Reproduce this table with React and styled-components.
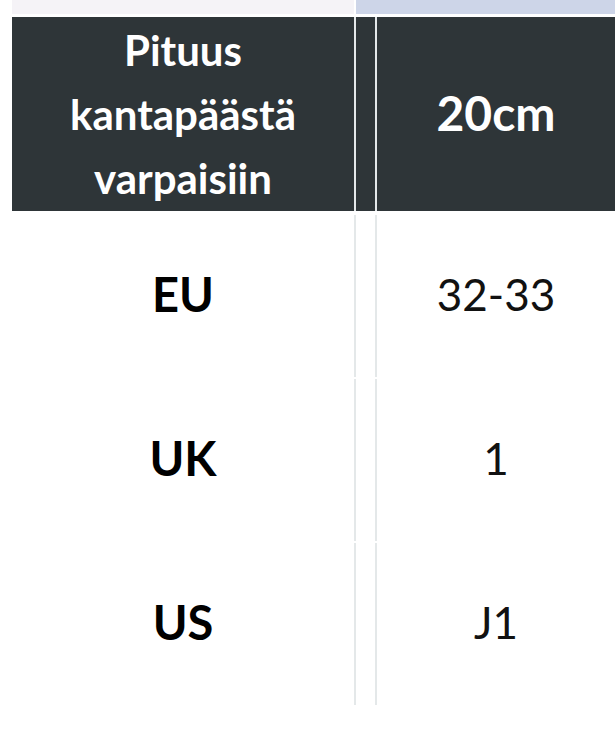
import React from 'react'
import styled, { createGlobalStyle } from 'styled-components'

const GlobalStyle = createGlobalStyle`
    body {
        margin: 0;
        background: #fff;
        font-family: Lato, "Noto Sans", sans-serif;
    }
`

const SizeTable = styled.div`
    padding-left: 12px;
    width: 603px;
`

const Row = styled.div`
    display: grid;
    grid-template-columns: 342px 23px 1fr;
    grid-template-rows: ${props => props.height}px;
    margin-top: ${props => props.gap || 0}px;
    overflow: hidden;
`

const Cell = styled.div`
    display: flex;
    align-items: center;
    justify-content: center;
    text-align: center;
    background: ${props => props.bg || '#fff'};
    color: ${props => props.color || '#000'};
    font-size: ${props => props.size || 44}px;
    font-weight: ${props => props.bold ? 700 : 400};
    line-height: ${props => props.lh || '1.2'};
    padding-bottom: ${props => props.shift || 0}px;
`

const Divider = styled.div`
    background: ${props => props.bg || '#fff'};
    border-left: 2px solid ${props => props.line};
    border-right: 2px solid ${props => props.line};
`

const DARK = '#2e3538'
const LINE = '#e4e8e9'

const sizes = [
    { label: 'EU', value: '32-33' },
    { label: 'UK', value: '1' },
    { label: 'US', value: 'J1' },
]

const App = () => {
    return (
        <>
            <GlobalStyle />
            <SizeTable>
                <Row height={14}>
                    <Cell bg='#f5f3f7' />
                    <Divider bg='#cdd5e8' line='#fff' style={{ borderRight: 'none' }} />
                    <Cell bg='#cdd5e8' />
                </Row>
                <Row height={194} gap={3}>
                    <Cell bg={DARK} color='#fff' bold size={42} lh='64px'>
                        Pituus<br />kantapäästä<br />varpaisiin
                    </Cell>
                    <Divider bg={DARK} line={LINE} />
                    <Cell bg={DARK} color='#fff' bold size={48} shift={2}>20cm</Cell>
                </Row>
                {sizes.map((s, i) => (
                    <Row key={s.label} height={162} gap={i === 0 ? 4 : 2}>
                        <Cell bold size={47} shift={4}>{s.label}</Cell>
                        <Divider line={LINE} />
                        <Cell color='#111' size={44} shift={4}>{s.value}</Cell>
                    </Row>
                ))}
            </SizeTable>
        </>
    )
}

export default App
